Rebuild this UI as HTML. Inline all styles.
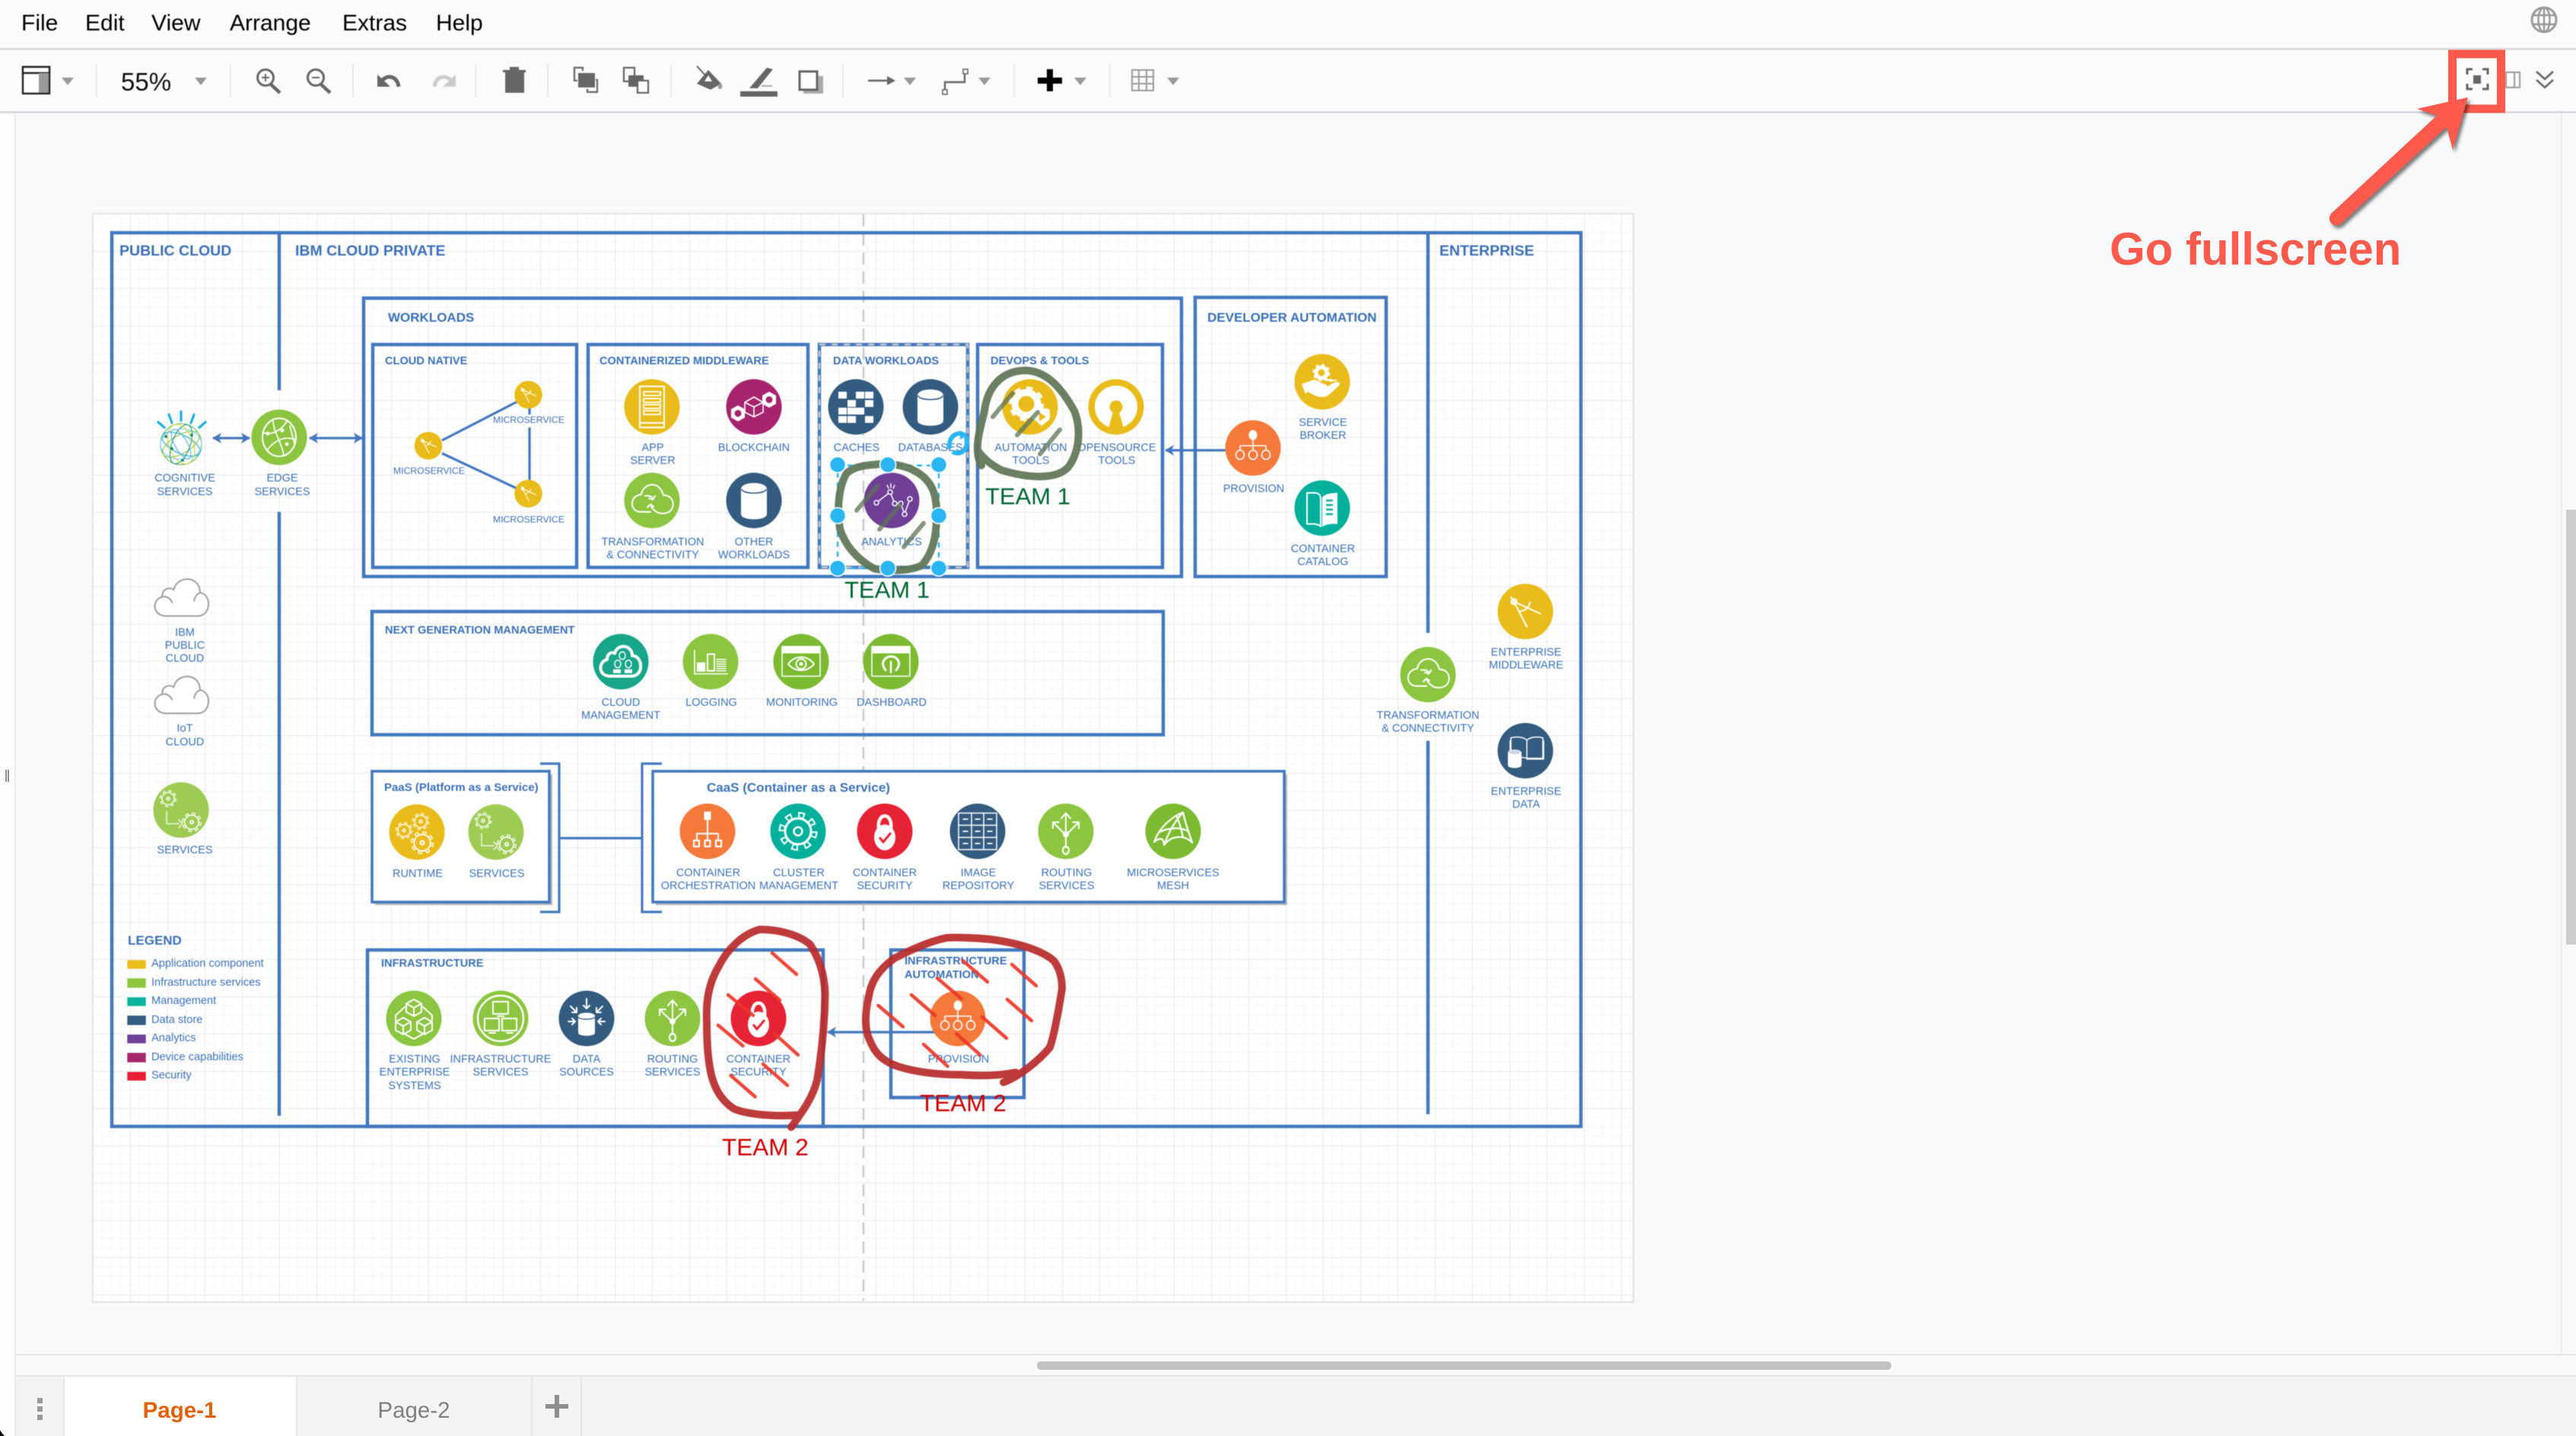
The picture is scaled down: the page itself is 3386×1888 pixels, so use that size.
<!DOCTYPE html>
<html><head><meta charset="utf-8"><title>draw.io</title>
<style>
html,body{margin:0;padding:0;background:#f8f9fa;width:3386px;height:1888px;overflow:hidden}
svg{display:block;font-family:"Liberation Sans",sans-serif}
.w{fill:none;stroke:#fff;stroke-width:2;stroke-linecap:round;stroke-linejoin:round}
.f{fill:#fff;stroke:none}
.b{stroke:#4479bf;stroke-width:4.5;fill:none}
.b2{stroke:#4479bf;stroke-width:3.2;fill:none}
.h1{font-weight:bold;font-size:19.5px;fill:#3b71b8}
.h2{font-weight:bold;font-size:17px;fill:#3b71b8}
.h3{font-weight:bold;font-size:14.6px;fill:#3b71b8}
.l{font-size:14.5px;fill:#3b71b8;text-anchor:middle}
.m{font-size:12.2px;fill:#3b71b8;text-anchor:middle}
.lg{font-size:14.6px;fill:#3b71b8}
.menu{font-size:30px;fill:#000}
.hat{stroke:#5e7555;stroke-width:6;opacity:.75;stroke-linecap:round}
.ring{fill:none;stroke:#5e7555;stroke-width:10;opacity:.92;stroke-linecap:round;stroke-linejoin:round}
.rring{fill:none;stroke:#b82a2a;stroke-width:10;opacity:.92;stroke-linecap:round;stroke-linejoin:round}
.rh{stroke:#ee3526;stroke-width:4.5;opacity:.9;stroke-linecap:round}
.tb{fill:#666}
.dd{fill:#999}
.sep{stroke:#e4e4e4;stroke-width:1.5}
.han{fill:#29b6f2;stroke:#fff;stroke-width:1.5}
</style></head><body>
<svg width="3386" height="1888" viewBox="0 0 3386 1888" xmlns="http://www.w3.org/2000/svg">
<defs>
<pattern id="grid" patternUnits="userSpaceOnUse" x="122" y="281" width="49" height="49">
<rect width="49" height="49" fill="#fff"/>
<path d="M12.25 0V49M24.5 0V49M36.75 0V49M0 12.25H49M0 24.5H49M0 36.75H49" stroke="#f5f5f5" stroke-width="1" fill="none"/>
<path d="M0 0V49M0 0H49" stroke="#e8e8e8" stroke-width="2" fill="none"/>
</pattern>
<g id="compass"><circle cx="-15" cy="-13" r="4.5" class="f"/><circle cx="-15" cy="-13" r="1.7" fill="#e9bc1c"/><path class="w" d="M-19 -19L-15 -13L2 20M-15 -13L20 3M6 -12C5 -6 0 -1 -8 0"/></g>
<g id="cloudc"><path class="w" d="M-2 15H-15C-29 15 -31 -6 -14 -8C-12 -22 9 -28 15 -7C32 -7 32 17 15 17C8 18 2 13 -1 8"/><path class="w" d="M-9 -6C-3 -7 1 -5 1 -1M-4 -3L1 -1L4 -6M2 8L-2 5L-6 9"/></g>
<g id="server"><path class="w" d="M-16 -27H16V27H-16Z"/><path class="w" d="M-16 21H16" /><path class="w" d="M-11 -20H11V-15H-11ZM-11 -11H11V-6H-11ZM-11 -3H11V2H-11ZM-11 5H11V10H-11Z" style="stroke-width:1.8"/></g>
<g id="chain"><path class="f" d="M-21 -2L-12 3V14L-21 19L-30 14V3Z"/><circle cx="-21" cy="8.5" r="4.5" fill="#a6246e"/><path class="f" d="M20 -20L29 -15V-4L20 1L11 -4V-15Z"/><circle cx="20" cy="-9.5" r="4.5" fill="#a6246e"/><path class="w" d="M0 -13L12 -6V7L0 13L-12 7V-6ZM-12 -6L0 0L12 -6M0 0V13" style="stroke-width:1.6;fill:#a6246e"/></g>
<g id="caches" class="f"><rect x="-23" y="-20" width="11" height="9"/><rect x="0" y="-20" width="11" height="9"/><rect x="12" y="-20" width="11" height="9"/><rect x="-11" y="-9" width="11" height="9"/><rect x="12" y="-9" width="11" height="9"/><rect x="-23" y="1" width="11" height="9"/><rect x="-11" y="1" width="11" height="9"/><rect x="0" y="1" width="11" height="9"/><rect x="-23" y="12" width="11" height="9"/><rect x="-11" y="12" width="11" height="9"/><rect x="12" y="12" width="11" height="9"/></g>
<g id="db"><path class="f" d="M-17 -15C-17 -25 17 -25 17 -15V18C17 27 -17 27 -17 18Z"/><ellipse cx="0" cy="-17" rx="15.5" ry="6" class="f"/><path d="M-16 -15C-16 -8 16 -8 16 -15" stroke="#335c80" stroke-width="1.6" fill="none"/></g>
<g id="gearauto"><circle cx="-5" cy="-4" r="15" fill="none" stroke="#fff" stroke-width="9"/><circle cx="-5" cy="-4" r="20" fill="none" stroke="#fff" stroke-width="6" stroke-dasharray="7.85 7.85"/><path class="f" d="M8 2H22C25 2 26 4 26 7V16L15 25L6 17V5Z"/><path d="M12 7L21 13L12 19Z" fill="#e9bc1c"/></g>
<g id="osrc"><circle r="28" class="f"/><circle cy="0" r="8.5" fill="#e9bc1c"/><path d="M-3.5 5L-10 28H10L3.5 5Z" fill="#e9bc1c"/></g>
<g id="analytics"><path class="w" d="M-20 3L-2 -11L4 4L12 4L17 18L24 -2" style="stroke-width:1.5"/><g fill="#6f3f96" stroke="#fff" stroke-width="1.5"><circle cx="-20" cy="3" r="3"/><circle cx="-2" cy="-11" r="3"/><circle cx="4" cy="4" r="3"/><circle cx="12" cy="4" r="3"/><circle cx="17" cy="18" r="3"/><circle cx="24" cy="-2" r="3"/></g><path class="w" d="M-6 -20L-4 -16M-1 -22V-17M4 -20L2 -16" style="stroke-width:1.4"/></g>
<g id="cmgmt"><path class="w" style="stroke-width:4" d="M-14 19C-30 19 -30 0 -18 -3C-18 -12 -11 -13 -8 -11C-4 -25 15 -22 15 -8C29 -8 31 19 14 19Z"/><g class="w" style="stroke-width:1.5"><ellipse cx="2" cy="-8" rx="4" ry="5"/><ellipse cx="-4" cy="3" rx="4" ry="5"/><ellipse cx="10" cy="3" rx="4" ry="5"/></g><rect x="-10" y="10" width="10" height="5" class="f"/><rect x="5" y="10" width="10" height="5" class="f"/></g>
<g id="logging"><path class="w" style="stroke-width:1.6" d="M-21 -15V16H22"/><rect x="-18" y="1" width="11" height="12" class="f"/><rect x="-4" y="-10" width="9" height="22" class="w" style="stroke-width:2"/><path class="w" style="stroke-width:1.4" d="M8 -3H20M8 0H20M8 3H20M8 6H20M8 9H20M8 12H20"/></g>
<g id="win"><rect x="-25" y="-20" width="50" height="39" class="w" style="stroke-width:1.5"/><rect x="-25" y="-20" width="50" height="9" class="f"/></g>
<g id="mon"><use href="#win"/><path class="w" d="M-17 3C-8 -9 8 -9 17 3C8 14 -8 14 -17 3Z"/><circle cy="3" r="6.5" class="w" style="stroke-width:2"/><circle cy="3" r="2.5" class="f"/></g>
<g id="dash"><use href="#win"/><path class="w" style="stroke-width:3" d="M-7 11C-15 1 -7 -7 0 -7C8 -7 15 1 7 11"/><path class="w" style="stroke-width:2.5" d="M0 0V14"/></g>
<g id="sg"><circle r="9.5" fill="none" stroke="#fff" stroke-width="3.6" stroke-dasharray="3.7 3.76"/><circle r="8" fill="currentColor" stroke="#fff" stroke-width="1.3"/><circle r="9.5" fill="none" stroke="currentColor" stroke-width="1.7" stroke-dasharray="1.6 5.86" stroke-dashoffset="-1"/><circle r="2.6" class="f"/><circle r="1" fill="currentColor"/></g>
<g id="runtime"><use href="#sg" transform="translate(5,-14)"/><use href="#sg" transform="translate(-17,-2)"/><use href="#sg" transform="translate(7,14) scale(1.35)"/></g>
<g id="svcs"><use href="#sg" transform="translate(-17,-15)"/><use href="#sg" transform="translate(14,16) scale(1.15)"/><path class="w" style="stroke-width:1.5;opacity:.85" d="M-19 2V18H-3M-3 13L2 18L-3 23"/></g>
<g id="orch"><rect x="-4.5" y="-26" width="9" height="11" class="f"/><path class="w" d="M0 -15V3M-14 11V3H14V11M0 3V11"/><g class="w" style="stroke-width:2.2"><rect x="-18" y="12" width="7" height="8"/><rect x="-3.5" y="12" width="7" height="8"/><rect x="11" y="12" width="7" height="8"/></g></g>
<g id="cluster"><circle r="22" fill="none" stroke="#fff" stroke-width="7" stroke-dasharray="8.6 8.68"/><circle r="17" fill="#00b09b" stroke="#fff" stroke-width="3"/><circle r="21.2" fill="none" stroke="#00b09b" stroke-width="4.5" stroke-dasharray="4.4 12.25" stroke-dashoffset="-2"/><circle r="5.5" fill="none" stroke="#fff" stroke-width="2.5"/></g>
<g id="lock"><path class="w" style="stroke-width:4.4" d="M-8 -3C-11 -26 11 -26 8 -3"/><ellipse cy="8" rx="14" ry="17" class="f"/><path d="M-7 8L-2 14L8 2" stroke="#e62334" stroke-width="3" fill="none"/></g>
<g id="imgrepo"><rect x="-25" y="-24" width="50" height="48" class="w" style="stroke-width:1.5"/><path class="w" style="stroke-width:1.5" d="M-25 -8H25M-25 8H25M-8 -24V24M8 -24V24"/><path class="w" style="stroke-width:1.7" d="M-19 -16H-13M-3 -16H3M13 -16H19M-19 0H-13M-3 0H3M13 0H19M-19 16H-13M-3 16H3M13 16H19"/></g>
<g id="routing"><path class="w" d="M0 5V21M0 5L-17 -12M0 5L17 -12M0 5V-24M-6 -17L0 -24L6 -17M-17 -4V-12H-9M17 -4V-12H9"/><circle cy="4" r="4" class="f"/><ellipse cy="25" rx="4" ry="5" class="w" style="stroke-width:2.2"/></g>
<g id="mesh"><path class="w" style="stroke-width:2.2" d="M-25 14C-18 -6 0 -20 13 -25C16 -10 22 5 25 15C15 4 -2 5 -12 18C-12 8 -18 8 -25 14ZM13 -25C0 -10 -5 0 -12 18M-18 1C-6 -5 10 -6 20 0M5 -19C10 -8 12 4 13 8"/></g>
<g id="cube"><path class="w" style="stroke-width:2" d="M0 -11L10 -5.5V5.5L0 11L-10 5.5V-5.5ZM-10 -5.5L0 0L10 -5.5M0 0V11"/></g>
<g id="exist"><use href="#cube" transform="translate(0,-14)"/><use href="#cube" transform="translate(-14,10)"/><use href="#cube" transform="translate(14,10)"/><path class="w" d="M-12 -15L-24 -4V2M12 -15L24 -4V2M-11 21L0 27L11 21"/></g>
<g id="infra"><circle r="30" class="w" style="stroke-width:2.4"/><g class="w" style="stroke-width:2"><rect x="-10" y="-22" width="20" height="16"/><rect x="-21" y="0" width="19" height="16"/><rect x="2" y="0" width="19" height="16"/></g><path class="w" d="M-4 -3H4M-15 19H-7M8 19H16"/></g>
<g id="dsrc"><path class="f" d="M-11 -3C-11 -9 11 -9 11 -3V19C11 24 -11 24 -11 19Z"/><path d="M-11 -2C-11 2 11 2 11 -2" stroke="#335c80" stroke-width="1.4" fill="none"/><path class="w" d="M0 -26V-13M-4 -17L0 -13L4 -17M-21 -16L-13 -8M-13 -14V-8H-19M21 -16L13 -8M13 -14V-8H19M-24 4H-15M-19 0L-15 4L-19 8M24 4H15M19 0L15 4L19 8"/></g>
<g id="prov"><ellipse cy="-17" rx="5.5" ry="6.5" class="f"/><path class="w" style="stroke-width:1.6" d="M0 -10V3M-17 3V-3H17V3"/><g class="w" style="stroke-width:1.6"><ellipse cx="-17" cy="9" rx="5.5" ry="6"/><ellipse cx="0" cy="9" rx="5.5" ry="6"/><ellipse cx="17" cy="9" rx="5.5" ry="6"/></g></g>
<g id="broker"><circle cy="-12" cx="-1" r="7" fill="none" stroke="#fff" stroke-width="5"/><circle cy="-12" cx="-1" r="10" fill="none" stroke="#fff" stroke-width="3" stroke-dasharray="3.9 3.95"/><path class="f" d="M-27 3L-10 -3L2 3C8 3 8 8 2 8H-4C4 9 10 4 16 1C23 -1 24 2 22 5C14 12 8 20 1 20C-8 20 -14 16 -19 13L-22 16Z"/><path class="w" style="stroke-width:2" d="M5 -2L12 -3M10 -1L18 -2"/></g>
<g id="catalog"><path class="w" style="stroke-width:2" d="M-20 -20H-10C-4 -20 -2 -16 -2 -12V24C-4 22 -10 20 -20 21Z"/><path class="f" d="M0 -14C3 -18 10 -20 20 -20V21C10 20 3 22 0 25Z"/><path d="M5 -10H14M5 -4H14M5 2H14M5 8H14" stroke="#00b09b" stroke-width="2.4"/></g>
<g id="edata"><path class="w" style="stroke-width:1.5" d="M-19 -17C-10 -19 -3 -18 2 -14C7 -18 14 -19 23 -17V10H2C-3 8 -10 9 -19 9ZM2 -14V9M-20 -13V3M24 -13V11H2"/><path class="f" d="M-23 3C-23 -3 -5 -3 -5 3V19C-5 24 -23 24 -23 19Z"/><ellipse cx="-14" cy="2" rx="7.5" ry="2.7" fill="#335c80" opacity=".25"/></g>
<g id="edge"><ellipse rx="22" ry="25" class="w" style="stroke-width:2"/><path class="w" style="stroke-width:1.7" d="M-21 -6C-10 -3 2 -8 10 -21M-16 17C-8 6 6 -3 21 3M-8 -22C-8 -8 4 8 6 24M14 -15L20 8"/><circle cx="4" cy="-9" r="2.4" class="f"/><circle cx="-15" cy="-5" r="2.4" class="f"/><circle cx="10" cy="9" r="2.4" class="f"/></g>
<g id="cloud"><path fill="#fff" stroke="#a2a2a2" stroke-width="2.2" d="M-20 26C-40 26 -40 3 -26 0C-26 -12 -16 -14 -10 -10C-6 -30 26 -30 26 -6C42 -4 42 26 22 26Z"/><path fill="none" stroke="#a2a2a2" stroke-width="2.2" d="M-26 0C-20 -2 -14 2 -12 8M26 -6C22 -4 18 0 18 6"/></g>
<marker id="ah" markerWidth="12" markerHeight="14" refX="11" refY="7" orient="auto-start-reverse" markerUnits="userSpaceOnUse"><path d="M0 0L12 7L0 14L3 7Z" fill="#4479bf"/></marker>
</defs>

<!-- chrome background -->
<rect width="3386" height="1888" fill="#f8f9fa"/>
<rect width="3386" height="64" fill="#fbfbfb"/>
<rect y="63" width="3386" height="3" fill="#dcdce0"/>
<rect y="66" width="3386" height="2" fill="#fff"/>
<rect y="68" width="3386" height="79" fill="#fbfbfb"/>
<rect y="146" width="3386" height="3" fill="#dcdce0"/>
<rect x="0" y="149" width="19" height="1739" fill="#fdfdfd"/>
<rect x="19" y="149" width="2" height="1739" fill="#ececec"/>
<rect x="3366" y="149" width="2" height="1632" fill="#ececec"/>
<rect x="3373" y="670" width="13" height="572" fill="#cfcfcf"/>
<path d="M8 1012V1028M11 1012V1028" stroke="#777" stroke-width="1.6"/>

<g style="filter:blur(.5px)">
<!-- menu -->
<text class="menu" x="28" y="40">File</text><text class="menu" x="112" y="40">Edit</text><text class="menu" x="199" y="40">View</text><text class="menu" x="302" y="40">Arrange</text><text class="menu" x="450" y="40">Extras</text><text class="menu" x="573" y="40">Help</text>
<g><circle cx="3344" cy="26" r="16" fill="none" stroke="#999" stroke-width="3"/><ellipse cx="3344" cy="26" rx="7.5" ry="16" fill="none" stroke="#999" stroke-width="2.5"/><path d="M3328 20H3360M3328 32H3360M3344 10V42" stroke="#999" stroke-width="2.5"/></g>

<!-- toolbar -->
<g class="sep"><path d="M127 85V128M303 85V128M464 85V128M625 85V128M720 85V128M882 85V128M1108 85V128M1333 85V128M1459 85V128"/></g>
<rect x="30" y="88" width="35" height="35" fill="#fff" stroke="#222" stroke-width="2.4"/><rect x="30" y="88" width="35" height="8" fill="#fff" stroke="#222" stroke-width="2.4"/><rect x="51" y="96" width="13" height="26" fill="#999"/>
<g class="dd"><path d="M81 102H97L89 112Z"/><path d="M256 102H272L264 112Z"/><path d="M1188 102H1204L1196 112Z"/><path d="M1286 102H1302L1294 112Z"/><path d="M1412 102H1428L1420 112Z"/><path d="M1534 102H1550L1542 112Z"/></g>
<text x="159" y="119" style="font-size:33px;fill:#111">55%</text>
<g fill="none" stroke="#666"><circle cx="349" cy="102" r="10.5" stroke-width="3"/><path d="M356 111L368 122" stroke-width="4.5"/><path d="M344 102H354M349 97V107" stroke-width="2"/><circle cx="415" cy="102" r="10.5" stroke-width="3"/><path d="M422 111L434 122" stroke-width="4.5"/><path d="M410 102H420" stroke-width="2"/></g>
<path d="M524 114C522 100 510 98 503 105" fill="none" stroke="#666" stroke-width="5"/><path d="M496 98V114H513Z" fill="#666"/>
<path d="M571 114C573 100 585 98 592 105" fill="none" stroke="#ccc" stroke-width="5"/><path d="M599 98V114H582Z" fill="#ccc"/>
<g class="tb"><rect x="664" y="95" width="25" height="27"/><rect x="661" y="92" width="30" height="3"/><rect x="670" y="88" width="12" height="4"/></g>
<rect x="760" y="96" width="22" height="19" class="tb"/><path d="M766 93V89H755V106H759M772 117V121H785V105H783" fill="none" stroke="#666" stroke-width="2.2"/>
<rect x="820" y="89" width="14" height="18" fill="none" stroke="#666" stroke-width="2.2"/><rect x="826" y="99" width="20" height="15" class="tb"/><rect x="838" y="106" width="14" height="16" fill="#fff" stroke="#666" stroke-width="2.2"/>
<path d="M931 92L948 110L934 118L916 110Z" class="tb"/><path d="M931 99L926 107H936Z" fill="#fff"/><path d="M916 87L928 100" stroke="#666" stroke-width="2"/><path d="M947 108C951 113 949 117 946 117C943 117 943 113 947 108Z" fill="#999"/>
<path d="M1008 89L1016 91L996 116H985Z" class="tb"/><rect x="1001" y="112" width="14" height="2" fill="#aaa"/><rect x="973" y="120" width="49" height="7" class="tb"/>
<rect x="1056" y="100" width="26" height="23" fill="#aaa"/><rect x="1051" y="94" width="23" height="24" fill="#fff" stroke="#666" stroke-width="3"/>
<path d="M1141 106H1168" stroke="#666" stroke-width="2.4"/><path d="M1166 100L1177 106L1166 112Z" fill="#666"/>
<path d="M1242 119V108H1268V96" fill="none" stroke="#666" stroke-width="2.4"/><rect x="1239" y="118" width="6" height="6" fill="#fff" stroke="#666" stroke-width="1.6"/><rect x="1266" y="91" width="6" height="6" fill="#fff" stroke="#666" stroke-width="1.6"/>
<rect x="1376" y="91" width="8" height="29" fill="#000"/><rect x="1364" y="102" width="32" height="8" fill="#000"/>
<path d="M1488 92H1516V119H1488ZM1488 101H1516M1488 110H1516M1497 92V119M1507 92V119" fill="none" stroke="#999" stroke-width="2"/>

<!-- right toolbar -->
<rect x="3294" y="95" width="18" height="20" fill="none" stroke="#999" stroke-width="2"/><path d="M3305 95V115" stroke="#999" stroke-width="2"/>
<path d="M3334 94L3345 104L3356 94M3334 105L3345 115L3356 105" fill="none" stroke="#666" stroke-width="2.6"/>
<path d="M3243 98V91H3250M3263 91H3270V98M3243 110V117H3250M3263 117H3270V110" fill="none" stroke="#666" stroke-width="3"/><rect x="3251" y="99" width="10" height="11" fill="#666"/>

<!-- page -->
<rect x="121" y="280" width="2027" height="1433" fill="#e0e0e0"/>
<rect x="122" y="281" width="2024" height="1430" fill="url(#grid)"/>
<path d="M1135 282V1710" stroke="#c8c8c8" stroke-width="2.4" stroke-dasharray="16 9"/>

<!-- frames -->
<path class="b" d="M147 306H2078V1481H147Z"/>
<path class="b" d="M367 306V513M367 673V1467M1877 306V832M1877 974V1465"/>
<path class="b" d="M478 392H1553V758H478Z"/>
<path class="b" d="M490 453H758V746H490Z"/>
<path class="b" d="M773 453H1062V746H773Z"/>
<path class="b" d="M1077 453H1272V746H1077Z"/>
<path d="M1077 453H1272V746H1077Z" fill="none" stroke="#c8c8c8" stroke-width="2.5" stroke-dasharray="8 8"/>
<path class="b" d="M1285 453H1528V746H1285Z"/>
<path class="b" d="M1571 391H1822V758H1571Z"/>
<path class="b" d="M489 804H1529V966H489Z"/>
<rect x="493" y="1018" width="233" height="172" fill="#b8b8b8"/>
<rect x="489" y="1014" width="233" height="172" fill="#fff" stroke="#4479bf" stroke-width="3.6"/>
<rect x="862" y="1018" width="830" height="172" fill="#b8b8b8"/>
<rect x="858" y="1014" width="830" height="172" fill="#fff" stroke="#4479bf" stroke-width="3.6"/>
<path class="b2" d="M710 1004H735V1199H710M870 1004H844V1199H870M735 1102H844"/>
<path class="b" d="M483 1249H1082V1481H483Z"/>
<path class="b" d="M1171 1249H1346V1443H1171Z"/>

<!-- arrows -->
<g stroke="#4479bf" stroke-width="3.2" fill="none">
<path d="M280 576H328" marker-start="url(#ah)" marker-end="url(#ah)"/>
<path d="M407 576H476" marker-start="url(#ah)" marker-end="url(#ah)"/>
<path d="M1611 592H1532" marker-end="url(#ah)"/>
<path d="M1228 1357H1088" marker-end="url(#ah)"/>
<path d="M581 579L680 528M581 596L679 642M696 537V545M696 562V632"/>
</g>

<!-- headers -->
<text class="h1" x="157" y="336">PUBLIC CLOUD</text>
<text class="h1" x="388" y="336">IBM CLOUD PRIVATE</text>
<text class="h1" x="1892" y="336">ENTERPRISE</text>
<text class="h2" x="510" y="423">WORKLOADS</text>
<text class="h2" x="1587" y="423">DEVELOPER AUTOMATION</text>
<text class="h3" x="506" y="479">CLOUD NATIVE</text>
<text class="h3" x="788" y="479">CONTAINERIZED MIDDLEWARE</text>
<text class="h3" x="1095" y="479">DATA WORKLOADS</text>
<text class="h3" x="1302" y="479">DEVOPS &amp; TOOLS</text>
<text class="h3" x="506" y="833">NEXT GENERATION MANAGEMENT</text>
<text class="h3" x="505" y="1040" style="font-size:15px">PaaS (Platform as a Service)</text>
<text class="h2" x="929" y="1041">CaaS (Container as a Service)</text>
<text class="h3" x="501" y="1271">INFRASTRUCTURE</text>
<text class="h3" x="1189" y="1268">INFRASTRUCTURE</text>
<text class="h3" x="1189" y="1286">AUTOMATION</text>
<text class="h2" x="168" y="1242">LEGEND</text>

<!-- legend -->
<g stroke="#fff" stroke-width=".6"><rect x="167" y="1262" width="25" height="12" fill="#ebbd1b"/><rect x="167" y="1286" width="25" height="13" fill="#8dc63f"/><rect x="167" y="1311" width="25" height="12" fill="#0bb39c"/><rect x="167" y="1335" width="25" height="13" fill="#325c80"/><rect x="167" y="1360" width="25" height="12" fill="#6f3f9a"/><rect x="167" y="1384" width="25" height="13" fill="#a6266e"/><rect x="167" y="1409" width="25" height="12" fill="#e71d32"/></g>
<text class="lg" x="199" y="1271">Application component</text>
<text class="lg" x="199" y="1296">Infrastructure services</text>
<text class="lg" x="199" y="1320">Management</text>
<text class="lg" x="199" y="1345">Data store</text>
<text class="lg" x="199" y="1369">Analytics</text>
<text class="lg" x="199" y="1394">Device capabilities</text>
<text class="lg" x="199" y="1418">Security</text>

<!-- watson -->
<g fill="none" stroke-linecap="round">
<path d="M238 541V553M222 545L226 556M255 545L251 556M208 555L216 562M270 555L262 562" stroke="#1aade3" stroke-width="3.2"/>
<g stroke-width="1.1">
<ellipse cx="238" cy="584" rx="27" ry="27" stroke="#5cb85c"/>
<ellipse cx="238" cy="584" rx="27" ry="12" stroke="#19a5d6" transform="rotate(25 238 584)"/>
<ellipse cx="238" cy="584" rx="27" ry="12" stroke="#8dc63f" transform="rotate(-30 238 584)"/>
<ellipse cx="238" cy="584" rx="12" ry="27" stroke="#1b8f7a" transform="rotate(20 238 584)"/>
<ellipse cx="238" cy="584" rx="16" ry="27" stroke="#c6d42f" transform="rotate(-20 238 584)"/>
<ellipse cx="238" cy="584" rx="22" ry="8" stroke="#4fb4e0" transform="rotate(60 238 584)"/>
<ellipse cx="238" cy="584" rx="27" ry="20" stroke="#7ccbe8"/>
</g></g>
<g fill="#1b8f7a"><circle cx="226" cy="590" r="2"/><circle cx="252" cy="572" r="2"/><circle cx="240" cy="605" r="2"/><circle cx="218" cy="574" r="2"/></g>

<!-- icons -->
<g transform="translate(367,575)"><circle r="36.5" fill="#8cc540"/><use href="#edge"/></g>
<g transform="translate(238,785) scale(.96)"><use href="#cloud"/></g>
<g transform="translate(238,913) scale(.96)"><use href="#cloud"/></g>
<g transform="translate(238,1065)" style="color:#9dcb53"><circle r="36.5" fill="#9dcb53"/><use href="#svcs"/></g>
<g transform="translate(694.5,519)"><circle r="18.3" fill="#e9bc1c"/><use href="#compass" transform="scale(.5)"/></g>
<g transform="translate(563,586)"><circle r="18.3" fill="#e9bc1c"/><use href="#compass" transform="scale(.5)"/></g>
<g transform="translate(694.5,649)"><circle r="18.3" fill="#e9bc1c"/><use href="#compass" transform="scale(.5)"/></g>
<g transform="translate(857,535)"><circle r="36.5" fill="#e9bc1c"/><use href="#server"/></g>
<g transform="translate(991,535)"><circle r="36.5" fill="#a6246e"/><use href="#chain"/></g>
<g transform="translate(857,658)"><circle r="36.5" fill="#8cc540"/><use href="#cloudc"/></g>
<g transform="translate(991,658)"><circle r="36.5" fill="#335c80"/><use href="#db"/></g>
<g transform="translate(1125,535)"><circle r="36.5" fill="#335c80"/><use href="#caches"/></g>
<g transform="translate(1223,535)"><circle r="36.5" fill="#335c80"/><use href="#db"/></g>
<g transform="translate(1172,658)"><circle r="36.5" fill="#6f3f96"/><use href="#analytics"/></g>
<g transform="translate(1354,535)"><circle r="36.5" fill="#e9bc1c"/><use href="#gearauto"/></g>
<g transform="translate(1467,535)"><circle r="36.5" fill="#e9bc1c"/><use href="#osrc"/></g>
<g transform="translate(1738,502)"><circle r="36.5" fill="#e9bc1c"/><use href="#broker"/></g>
<g transform="translate(1647,589)"><circle r="36.5" fill="#f4793b"/><use href="#prov"/></g>
<g transform="translate(1738,668)"><circle r="36.5" fill="#00b09b"/><use href="#catalog"/></g>
<g transform="translate(816,870)"><circle r="36.5" fill="#18a689"/><use href="#cmgmt"/></g>
<g transform="translate(934,870)"><circle r="36.5" fill="#8cc540"/><use href="#logging"/></g>
<g transform="translate(1053,870)"><circle r="36.5" fill="#7cbb31"/><use href="#mon"/></g>
<g transform="translate(1171,870)"><circle r="36.5" fill="#7cbb31"/><use href="#dash"/></g>
<g transform="translate(548,1094)" style="color:#e9bc1c"><circle r="36.5" fill="#e9bc1c"/><use href="#runtime"/></g>
<g transform="translate(652,1094)" style="color:#9dcb53"><circle r="36.5" fill="#9dcb53"/><use href="#svcs"/></g>
<g transform="translate(930,1093)"><circle r="36.5" fill="#f4793b"/><use href="#orch"/></g>
<g transform="translate(1049,1093)"><circle r="36.5" fill="#00b09b"/><use href="#cluster"/></g>
<g transform="translate(1163,1093)"><circle r="36.5" fill="#e62334"/><use href="#lock"/></g>
<g transform="translate(1285,1093)"><circle r="36.5" fill="#335c80"/><use href="#imgrepo"/></g>
<g transform="translate(1401,1093)"><circle r="36.5" fill="#8cc540"/><use href="#routing"/></g>
<g transform="translate(1542,1093)"><circle r="36.5" fill="#7cbb31"/><use href="#mesh"/></g>
<g transform="translate(544,1339)"><circle r="36.5" fill="#8cc540"/><use href="#exist"/></g>
<g transform="translate(658,1339)"><circle r="36.5" fill="#8cc540"/><use href="#infra"/></g>
<g transform="translate(771,1339)"><circle r="36.5" fill="#335c80"/><use href="#dsrc"/></g>
<g transform="translate(884,1339)"><circle r="36.5" fill="#8cc540"/><use href="#routing"/></g>
<g transform="translate(997,1339)"><circle r="36.5" fill="#e62334"/><use href="#lock"/></g>
<g transform="translate(1259,1339)"><circle r="36.5" fill="#f4793b"/><use href="#prov"/></g>
<g transform="translate(2005,804)"><circle r="36.5" fill="#e9bc1c"/><use href="#compass"/></g>
<g transform="translate(1877,887)"><circle r="36.5" fill="#8cc540"/><use href="#cloudc"/></g>
<g transform="translate(2005,987)"><circle r="36.5" fill="#335c80"/><use href="#edata"/></g>

<!-- labels -->
<text class="l" x="243" y="633">COGNITIVE</text><text class="l" x="243" y="651">SERVICES</text>
<text class="l" x="371" y="633">EDGE</text><text class="l" x="371" y="651">SERVICES</text>
<text class="l" x="243" y="836">IBM</text><text class="l" x="243" y="853">PUBLIC</text><text class="l" x="243" y="870">CLOUD</text>
<text class="l" x="243" y="962">IoT</text><text class="l" x="243" y="980">CLOUD</text>
<text class="l" x="243" y="1122">SERVICES</text>
<text class="m" x="695" y="556">MICROSERVICE</text>
<text class="m" x="564" y="623">MICROSERVICE</text>
<text class="m" x="695" y="687">MICROSERVICE</text>
<text class="l" x="858" y="593">APP</text><text class="l" x="858" y="610">SERVER</text>
<text class="l" x="991" y="593">BLOCKCHAIN</text>
<text class="l" x="858" y="717">TRANSFORMATION</text><text class="l" x="858" y="734">&amp; CONNECTIVITY</text>
<text class="l" x="991" y="717">OTHER</text><text class="l" x="991" y="734">WORKLOADS</text>
<text class="l" x="1126" y="593">CACHES</text><text class="l" x="1223" y="593">DATABASES</text>
<text class="l" x="1172" y="717">ANALYTICS</text>
<text class="l" x="1355" y="593">AUTOMATION</text><text class="l" x="1355" y="610">TOOLS</text>
<text class="l" x="1468" y="593">OPENSOURCE</text><text class="l" x="1468" y="610">TOOLS</text>
<text class="l" x="1739" y="560">SERVICE</text><text class="l" x="1739" y="577">BROKER</text>
<text class="l" x="1648" y="647">PROVISION</text>
<text class="l" x="1739" y="726">CONTAINER</text><text class="l" x="1739" y="743">CATALOG</text>
<text class="l" x="816" y="928">CLOUD</text><text class="l" x="816" y="945">MANAGEMENT</text>
<text class="l" x="935" y="928">LOGGING</text><text class="l" x="1054" y="928">MONITORING</text><text class="l" x="1172" y="928">DASHBOARD</text>
<text class="l" x="549" y="1153">RUNTIME</text><text class="l" x="653" y="1153">SERVICES</text>
<text class="l" x="931" y="1152">CONTAINER</text><text class="l" x="931" y="1169">ORCHESTRATION</text>
<text class="l" x="1050" y="1152">CLUSTER</text><text class="l" x="1050" y="1169">MANAGEMENT</text>
<text class="l" x="1163" y="1152">CONTAINER</text><text class="l" x="1163" y="1169">SECURITY</text>
<text class="l" x="1286" y="1152">IMAGE</text><text class="l" x="1286" y="1169">REPOSITORY</text>
<text class="l" x="1402" y="1152">ROUTING</text><text class="l" x="1402" y="1169">SERVICES</text>
<text class="l" x="1542" y="1152">MICROSERVICES</text><text class="l" x="1542" y="1169">MESH</text>
<text class="l" x="545" y="1397">EXISTING</text><text class="l" x="545" y="1414">ENTERPRISE</text><text class="l" x="545" y="1432">SYSTEMS</text>
<text class="l" x="658" y="1397">INFRASTRUCTURE</text><text class="l" x="658" y="1414">SERVICES</text>
<text class="l" x="771" y="1397">DATA</text><text class="l" x="771" y="1414">SOURCES</text>
<text class="l" x="884" y="1397">ROUTING</text><text class="l" x="884" y="1414">SERVICES</text>
<text class="l" x="997" y="1397">CONTAINER</text><text class="l" x="997" y="1414">SECURITY</text>
<text class="l" x="1260" y="1397">PROVISION</text>
<text class="l" x="2006" y="862">ENTERPRISE</text><text class="l" x="2006" y="879">MIDDLEWARE</text>
<text class="l" x="1877" y="945">TRANSFORMATION</text><text class="l" x="1877" y="962">&amp; CONNECTIVITY</text>
<text class="l" x="2006" y="1045">ENTERPRISE</text><text class="l" x="2006" y="1062">DATA</text>

<!-- selection -->
<rect x="1101" y="612" width="133" height="135" fill="none" stroke="#29b6f2" stroke-width="2.4" stroke-dasharray="7 6"/>

<!-- sketches -->
<path class="ring" d="M1290 612C1278 590 1290 560 1294 540C1298 510 1315 488 1347 487C1378 487 1398 515 1412 540C1422 565 1418 595 1405 613C1392 630 1355 630 1316 618C1305 612 1294 605 1285 592"/>
<path class="hat" d="M1305 548L1331 517M1337 572L1364 542M1367 597L1393 565"/>
<path class="ring" d="M1148 611C1170 608 1190 612 1204 620C1225 632 1232 650 1231 680C1231 700 1228 725 1212 743C1195 752 1168 750 1150 748C1125 735 1110 715 1104 695C1100 670 1102 640 1113 622C1122 614 1135 612 1148 611Z"/>
<path class="hat" d="M1126 671L1153 639M1156 696L1183 664M1188 719L1214 688"/>
<text x="1295" y="663" style="font-size:31px;fill:#006633">TEAM 1</text>
<text x="1110" y="786" style="font-size:31px;fill:#006633">TEAM 1</text>

<g class="han">
<circle cx="1101" cy="611" r="10.5"/><circle cx="1167" cy="611" r="10.5"/><circle cx="1234" cy="611" r="10.5"/>
<circle cx="1101" cy="678" r="10.5"/><circle cx="1234" cy="678" r="10.5"/>
<circle cx="1101" cy="747" r="10.5"/><circle cx="1167" cy="747" r="10.5"/><circle cx="1234" cy="747" r="10.5"/>
</g>
<path d="M1248 590C1246 574 1258 566 1268 572M1270 574C1274 590 1264 600 1252 594" fill="none" stroke="#29b6f2" stroke-width="6"/>
<path d="M1262 566L1272 572L1262 578Z" fill="#29b6f2"/>

<path class="rring" d="M1040 1482C1052 1465 1068 1445 1074 1420C1080 1385 1084 1345 1084.5 1307C1084 1285 1078 1262 1065 1242C1052 1230 1025 1222 999 1222C975 1228 955 1250 945 1270C930 1295 928 1320 929 1343C929 1365 930 1385 932.5 1400C936 1425 945 1445 965 1458C985 1466 1020 1468 1049 1466"/>
<path class="rh" d="M1015 1253L1047 1281M993 1287L1025 1315M957 1308L990 1335M944 1348L976.5 1375M1018 1359L1049 1387M1003 1399L1035 1427M960.5 1414L992.6 1442"/>
<path class="rring" d="M1319 1423C1340 1415 1365 1395 1380 1377C1386 1360 1392 1325 1396 1300C1396 1285 1392 1272 1385 1263C1370 1250 1340 1240 1302 1235C1280 1233 1260 1232 1244 1233C1220 1238 1195 1250 1175.5 1260C1155 1275 1145 1290 1142 1310C1136 1335 1137 1355 1143 1367C1150 1385 1160 1395 1180 1402C1205 1410 1235 1413 1264 1413C1290 1415 1315 1414 1335 1410"/>
<path class="rh" d="M1265.5 1263L1298 1291M1330 1268L1362 1296M1232 1286L1263.6 1313M1198 1308L1229 1335M1324 1314L1356 1342M1154.5 1322L1187 1350M1291 1337L1323 1365M1257 1359L1288.4 1387M1214 1373L1245.6 1402"/>
<text x="949" y="1519" style="font-size:31.5px;fill:#cc0000">TEAM 2</text>
<text x="1209" y="1461" style="font-size:31.5px;fill:#cc0000">TEAM 2</text>
</g>

<!-- annotation -->
<rect x="3223.5" y="71" width="64" height="72" fill="none" stroke="#ff5a4b" stroke-width="11"/>
<path d="M3244 128L3177 143L3203 152L3065 280A9 9 0 0 0 3077 294L3216 167L3224 197Z" fill="#ff5a4b" style="filter:drop-shadow(3px 4px 2px rgba(0,0,0,.5))"/>
<text x="2773" y="348" style="font-size:60px;font-weight:bold;fill:#ff5a4b">Go fullscreen</text>

<!-- bottom -->
<rect x="21" y="1781" width="3346" height="28" fill="#fafafa"/>
<rect x="21" y="1780" width="3365" height="2" fill="#e6e6e6"/>
<rect x="21" y="1808" width="3365" height="2" fill="#e6e6e6"/>
<rect x="21" y="1810" width="3365" height="78" fill="#f1f3f5"/>
<rect x="1363" y="1790" width="1123" height="11" rx="5" fill="#c2c2c2"/>
<rect x="84" y="1810" width="306" height="78" fill="#fff"/>
<path d="M84 1810V1888M390 1810V1888M699 1810V1888M764 1810V1888" stroke="#e2e2e2" stroke-width="1.5"/>
<g fill="#999"><rect x="49" y="1838" width="7" height="7"/><rect x="49" y="1849" width="7" height="7"/><rect x="49" y="1860" width="7" height="7"/></g>
<text x="236" y="1864" text-anchor="middle" style="font-size:29.5px;font-weight:bold;fill:#e36209">Page-1</text>
<text x="544" y="1864" text-anchor="middle" style="font-size:29.5px;fill:#808080">Page-2</text>
<rect x="729" y="1834" width="6" height="30" fill="#8f8f8f"/><rect x="717" y="1846" width="30" height="6" fill="#8f8f8f"/>
<path d="M0 1880C2 1884 4 1886 6 1888H0Z" fill="#000"/>
</svg>
</body></html>
